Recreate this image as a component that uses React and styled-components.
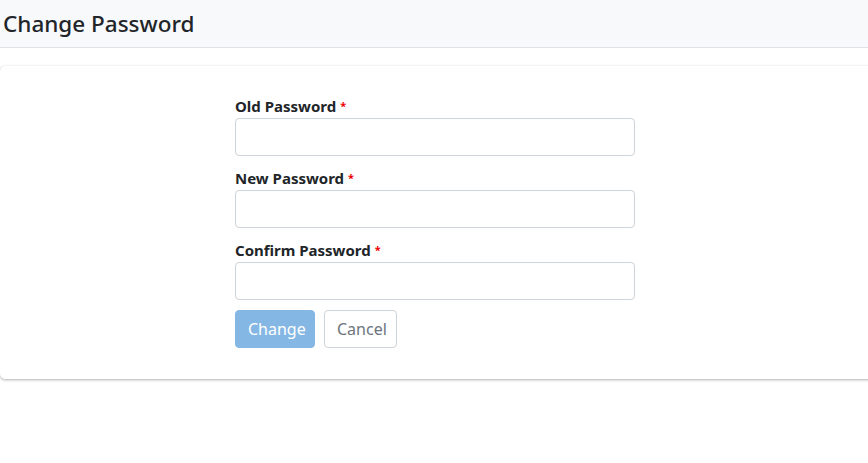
import React from 'react';
import styled, { createGlobalStyle } from 'styled-components';

const GlobalStyle = createGlobalStyle`
  body {
    margin: 0;
    background: #fff;
    font-family: "Noto Sans", "Open Sans", sans-serif;
    color: #212529;
  }
  * { box-sizing: border-box; }
`;

const Page = styled.div`
  width: 868px;
  overflow: hidden;
  padding-bottom: 20px;
`;

const Header = styled.header`
  height: 48px;
  background: #f8f9fa;
  border-bottom: 1px solid #dee2e6;
  display: flex;
  align-items: center;
  padding: 0 3px;
`;

const Title = styled.h1`
  margin: 0;
  font-size: 22.5px;
  font-weight: 500;
  color: #212529;
`;

const Card = styled.section`
  margin: 18px -6px 0 0;
  background: #fff;
  border-radius: 5px;
  box-shadow: 0 1px 3px rgba(0, 0, 0, 0.3), 0 0 1px rgba(0, 0, 0, 0.06);
  padding: 30px 4px 31px 0;
  display: flex;
  justify-content: center;
`;

const Form = styled.form`
  width: 400px;
  display: flex;
  flex-direction: column;
`;

const Field = styled.div`
  margin-bottom: 12px;
`;

const Label = styled.label`
  display: block;
  font-size: 15px;
  font-weight: 700;
  margin-bottom: 2px;
  line-height: 20px;
`;

const Required = styled.span`
  color: #e00;
  font-size: 11px;
  margin-left: 4px;
  vertical-align: top;
`;

const Input = styled.input`
  display: block;
  width: 100%;
  height: 38px;
  border: 1px solid #ced4da;
  border-radius: 4px;
  padding: 6px 12px;
  font-size: 16px;
`;

const Actions = styled.div`
  display: flex;
  gap: 9px;
  margin-top: -2px;
`;

const Button = styled.button`
  height: 38px;
  padding: 0 12px;
  border-radius: 4px;
  font-family: inherit;
  font-size: 16px;
  border: 1px solid ${p => (p.$primary ? '#85b7e4' : '#ced4da')};
  background: ${p => (p.$primary ? '#85b7e4' : '#fff')};
  color: ${p => (p.$primary ? '#fff' : '#6c757d')};
  width: ${p => p.$w}px;
`;

const fields = ['Old Password', 'New Password', 'Confirm Password'];

export default function App() {
  return (
    <Page>
      <GlobalStyle />
      <Header>
        <Title>Change Password</Title>
      </Header>
      <Card>
        <Form onSubmit={e => e.preventDefault()}>
          {fields.map(f => (
            <Field key={f}>
              <Label>
                {f}
                <Required>*</Required>
              </Label>
              <Input type="password" />
            </Field>
          ))}
          <Actions>
            <Button type="submit" $primary $w={80}>Change</Button>
            <Button type="button" $w={73}>Cancel</Button>
          </Actions>
        </Form>
      </Card>
    </Page>
  );
}
